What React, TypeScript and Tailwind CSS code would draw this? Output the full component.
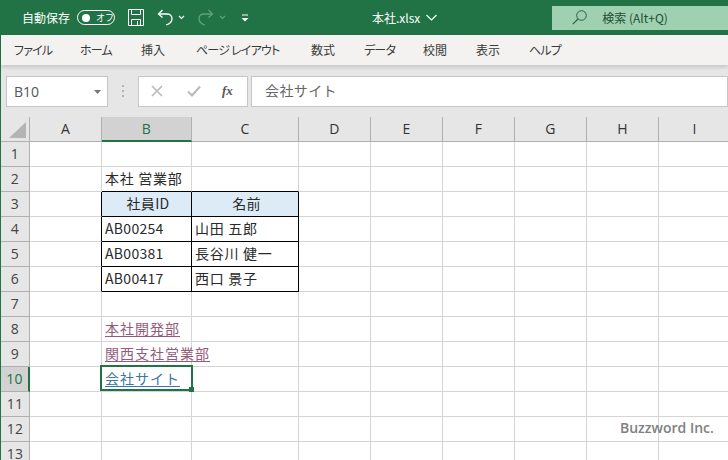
const font = { fontFamily: '"Noto Sans CJK JP", "Liberation Sans", sans-serif' };

const columns = ["A", "B", "C", "D", "E", "F", "G", "H", "I"];
const kana = '[font-feature-settings:"palt"] tracking-[-0.8px]';
const tabs: [string, string][] = [
  ["ファイル", `w-[38px] ${kana}`],
  ["ホーム", `w-[33px] ${kana}`],
  ["挿入", "w-[27px]"],
  ["ページ レイアウト", `w-[87px] ${kana}`],
  ["数式", "w-[25px]"],
  ["データ", `w-[31px] ${kana}`],
  ["校閲", "w-[25px]"],
  ["表示", "w-[25px]"],
  ["ヘルプ", `w-[32px] ${kana}`],
];

type Cell = { text?: string; cls?: string };
const blank: Cell = {};
const link = "underline underline-offset-[2px] [text-decoration-skip-ink:none] tracking-[1px]";
const jp = "tracking-[0.7px] border-r-black border-b-black";
const rows: Cell[][] = [
  [blank, blank, blank],
  [blank, { text: "本社 営業部", cls: "tracking-[0.7px] border-b-black" }, { cls: "border-b-black" }],
  [
    { cls: "border-r-black" },
    { text: "社員ID", cls: "bg-[#ddebf7] border-r-black border-b-black justify-center" },
    { text: "名前", cls: "bg-[#ddebf7] border-r-black border-b-black justify-center" },
  ],
  [
    { cls: "border-r-black" },
    { text: "AB00254", cls: "border-r-black border-b-black" },
    { text: "山田 五郎", cls: jp },
  ],
  [
    { cls: "border-r-black" },
    { text: "AB00381", cls: "border-r-black border-b-black" },
    { text: "長谷川 健一", cls: jp },
  ],
  [
    { cls: "border-r-black" },
    { text: "AB00417", cls: "border-r-black border-b-black" },
    { text: "西口 景子", cls: jp },
  ],
  [blank, blank, blank],
  [blank, { text: "本社開発部", cls: `text-[#935c7b] ${link}` }, blank],
  [blank, { text: "関西支社営業部", cls: `text-[#935c7b] ${link}` }, blank],
  [blank, { text: "会社サイト", cls: `text-[#3a76a0] ${link}` }, blank],
  [blank, blank, blank],
  [blank, blank, blank],
  [blank, blank, blank],
];

function Chevron({ color = "#fff" }: { color?: string }) {
  return (
    <svg width="7" height="5" viewBox="0 0 7 5" fill="none" stroke={color} strokeWidth="1.2">
      <path d="M1 1 L3.5 3.5 L6 1" />
    </svg>
  );
}

function TitleBar() {
  return (
    <div className="flex h-[35px] items-center bg-[#217346] text-white">
      <span className="ml-[21px] text-[12px] leading-none">自動保存</span>
      <div className="ml-[7px] flex h-[15px] w-[38px] items-center rounded-full border border-white pl-[4px]">
        <span className="h-[8px] w-[8px] rounded-full bg-white" />
        <span className="ml-[6px] text-[9px] leading-none">オフ</span>
      </div>
      <svg className="ml-[13px]" width="16" height="17" viewBox="0 0 16 17" fill="none" stroke="#fff" strokeWidth="1">
        <path d="M0.5 0.5 H15.5 V16.5 H0.5 Z" />
        <path d="M3.5 0.5 V5.5 H12.5 V0.5" />
        <path d="M3.5 16.5 V10.5 H12.5 V16.5" />
        <path d="M9.5 12 V16" />
      </svg>
      <svg className="ml-[13px]" width="16" height="17" viewBox="0 0 16 17" fill="none" stroke="#fff" strokeWidth="1.3">
        <path d="M5.5 1 L1.5 5 L5.5 8.5" />
        <path d="M1.5 5 H10 C13 5 15 7 15 9.5 C15 12.5 12.5 15 9 16" />
      </svg>
      <span className="ml-[5px]"><Chevron /></span>
      <svg className="ml-[13px]" width="16" height="17" viewBox="0 0 16 17" fill="none" stroke="#5fa27d" strokeWidth="1.3">
        <path d="M10.5 1 L14.5 5 L10.5 8.5" />
        <path d="M14.5 5 H6 C3 5 1 7 1 9.5 C1 12.5 3.5 15 7 16" />
      </svg>
      <span className="ml-[5px]"><Chevron color="#5fa27d" /></span>
      <svg className="ml-[15px]" width="8" height="8" viewBox="0 0 8 8" fill="#fff">
        <rect x="1" y="0.5" width="6" height="1" />
        <path d="M0.5 4 H7.5 L4 7.5 Z" />
      </svg>
      <span className="ml-[123px] text-[12px] leading-none">本社.xlsx</span>
      <svg className="ml-[6px]" width="11" height="7" viewBox="0 0 11 7" fill="none" stroke="#fff" strokeWidth="1.1">
        <path d="M0.5 1 L5.5 6 L10.5 1" />
      </svg>
      <div className="ml-[115px] flex h-[24px] flex-1 items-center bg-[#9fd0b0] pl-[20px] text-[#1e4e36]">
        <svg width="15" height="15" viewBox="0 0 15 15" fill="none" stroke="#2d5e45" strokeWidth="1">
          <circle cx="9.5" cy="5.5" r="4.8" />
          <path d="M6 9 L0.8 14.2" strokeWidth="1.2" />
        </svg>
        <span className="ml-[15px] text-[12px] leading-none">検索 (Alt+Q)</span>
      </div>
    </div>
  );
}

function Ribbon() {
  return (
    <div className="relative flex h-[30px] items-center gap-[28px] bg-[#f3f2f1] pl-[13px] text-[12px] text-[#3a3a3a] shadow-[0_2px_4px_rgba(0,0,0,0.15)]">
      {tabs.map(([t, w]) => (
        <span key={t} className={`${w} whitespace-nowrap leading-none`}>
          {t}
        </span>
      ))}
    </div>
  );
}

function FormulaBar() {
  return (
    <div className="flex h-[52px] items-start bg-[#e6e6e6] pt-[11px]">
      <div className="ml-[5px] flex h-[31px] w-[102px] items-center justify-between border border-[#c6c6c6] bg-white pl-[7px] pr-[6px] text-[14px] text-[#555]">
        <span style={{ fontFamily: '"Open Sans", sans-serif' }}>B10</span>
        <svg width="7" height="4" viewBox="0 0 7 4" fill="#777"><path d="M0 0 H7 L3.5 4 Z" /></svg>
      </div>
      <div className="ml-[14px] mr-[14px] mt-[9px] flex w-[2px] flex-col gap-[3px]">
        <span className="h-[2px] w-[2px] bg-[#b5b5b5]" />
        <span className="h-[2px] w-[2px] bg-[#b5b5b5]" />
        <span className="h-[2px] w-[2px] bg-[#b5b5b5]" />
      </div>
      <div className="flex h-[31px] w-[110px] items-center border border-[#c6c6c6] bg-white pb-[2px] pl-[12px]">
        <svg width="12" height="12" viewBox="0 0 12 12" stroke="#b9b9b9" strokeWidth="1.6" fill="none">
          <path d="M1 1 L11 11 M11 1 L1 11" />
        </svg>
        <svg className="ml-[24px]" width="14" height="12" viewBox="0 0 14 12" stroke="#b9b9b9" strokeWidth="2" fill="none">
          <path d="M1 6.5 L5 10.5 L13 1.5" />
        </svg>
        <span className="ml-[21px] text-[13px] font-bold italic leading-none text-[#555]" style={{ fontFamily: '"Liberation Serif", serif' }}>
          fx
        </span>
      </div>
      <div className="ml-[3px] flex h-[31px] flex-1 items-center border border-[#c6c6c6] bg-white pb-[2px] pl-[13px] text-[14px] tracking-[0.4px] text-[#666]">
        会社サイト
      </div>
    </div>
  );
}

function Sheet() {
  return (
    <div className="relative grid grid-cols-[29px_72px_90px_107px_72px_72px_72px_72px_72px_72px] auto-rows-[25px] bg-white text-[14px] tracking-[0.3px] text-[#2a2a2a]">
      <div className="relative border-r border-b border-[#b0b0b0] bg-[#e6e6e6]">
        <svg className="absolute left-[8px] top-[5px]" width="17" height="16" viewBox="0 0 17 16" fill="#b4b4b4">
          <path d="M17 0 V16 H0 Z" />
        </svg>
      </div>
      {columns.map((c) => (
        <div
          key={c}
          className={
            c === "B"
              ? "flex items-center justify-center border-r border-b-2 border-r-[#b0b0b0] border-b-[#217346] bg-[#d2d2d2] text-[#217346]"
              : "flex items-center justify-center border-r border-b border-[#b0b0b0] bg-[#e6e6e6] pb-px text-[#333]"
          }
          style={{ fontFamily: '"Open Sans", sans-serif' }}
        >
          {c}
        </div>
      ))}
      {rows.map((row, i) => (
        <div key={i} className="contents">
          <div
            className={
              i === 9
                ? "flex items-center justify-center border-r-2 border-b border-r-[#217346] border-b-[#b0b0b0] bg-[#d2d2d2] pb-px text-[#217346]"
                : "flex items-center justify-center border-r border-b border-[#b0b0b0] bg-[#e6e6e6] pb-px text-[#444]"
            }
            style={{ fontFamily: '"Open Sans", sans-serif' }}
          >
            {i + 1}
          </div>
          {columns.map((c, j) => {
            const cell = j < 3 ? row[j] : blank;
            return (
              <div
                key={c}
                className={`flex items-center whitespace-nowrap border-r border-b border-[#d4d4d4] pb-[2px] pl-[3px] ${cell.cls ?? ""}`}
              >
                {cell.text}
              </div>
            );
          })}
        </div>
      ))}
      <div className="pointer-events-none absolute left-[99px] top-[248px] h-[26px] w-[93px] border-2 border-[#217346]">
        <span className="absolute right-[-3px] bottom-[-3px] h-[5px] w-[5px] bg-[#217346]" />
      </div>
      <span
        className="absolute left-[619px] top-[304px] text-[14px] font-semibold leading-none tracking-normal text-[#808080]"
        style={{ fontFamily: '"Open Sans", sans-serif' }}
      >
        Buzzword Inc.
      </span>
    </div>
  );
}

export default function App() {
  return (
    <div className="h-[460px] w-[728px] overflow-hidden bg-[#217346] pl-px" style={font}>
      <TitleBar />
      <Ribbon />
      <FormulaBar />
      <Sheet />
    </div>
  );
}
